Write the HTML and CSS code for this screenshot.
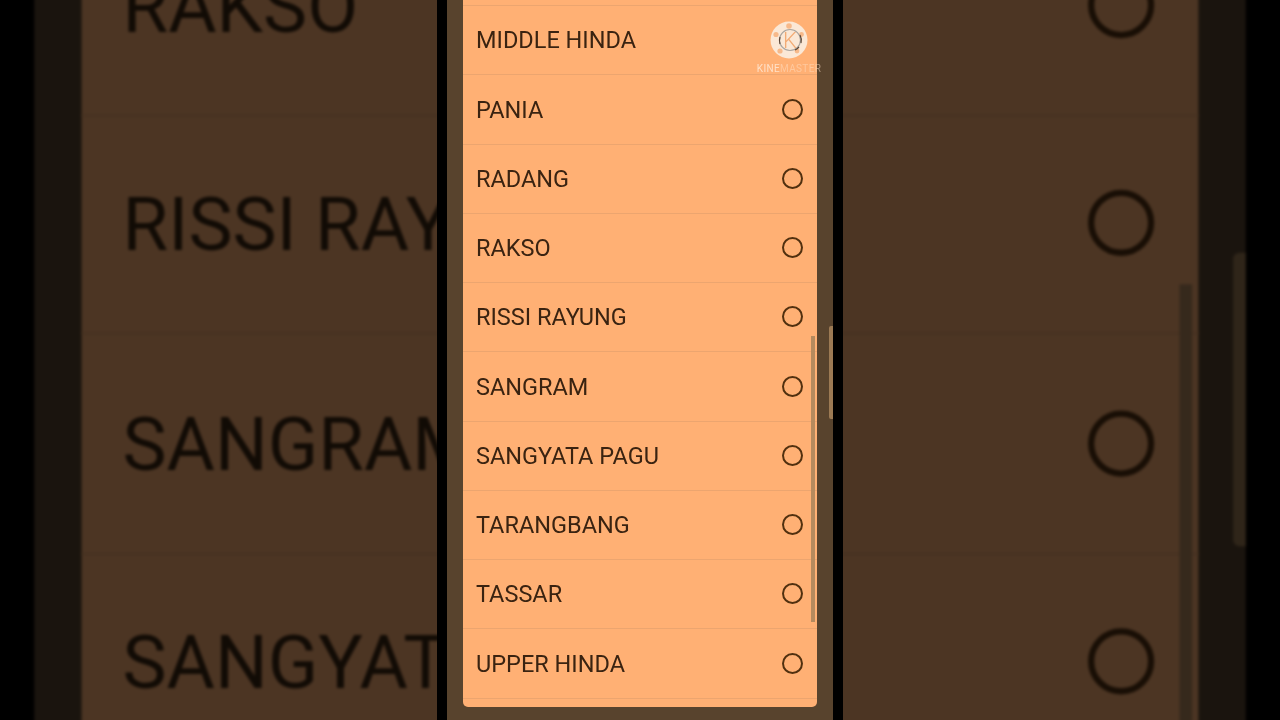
FILE: index.html
```html
<!DOCTYPE html>
<html lang="en">
<head>
<meta charset="utf-8">
<title>Variety list</title>
<link rel="stylesheet" href="styles.css">
</head>
<body>
<div class="stage">
  <div class="phone backdrop" aria-hidden="true">
    <div class="screen">
      <div class="edge-bar"></div>
      <ul class="panel">
        <li class="row"><span>MIDDLE HINDA</span><i class="radio"></i></li>
        <li class="row"><span>PANIA</span><i class="radio"></i></li>
        <li class="row"><span>RADANG</span><i class="radio"></i></li>
        <li class="row"><span>RAKSO</span><i class="radio"></i></li>
        <li class="row"><span>RISSI RAYUNG</span><i class="radio"></i></li>
        <li class="row"><span>SANGRAM</span><i class="radio"></i></li>
        <li class="row"><span>SANGYATA PAGU</span><i class="radio"></i></li>
        <li class="row"><span>TARANGBANG</span><i class="radio"></i></li>
        <li class="row"><span>TASSAR</span><i class="radio"></i></li>
        <li class="row"><span>UPPER HINDA</span><i class="radio"></i></li>
      </ul>
      <div class="scrollbar"></div>
    </div>
  </div>
  <div class="phone front">
    <div class="screen">
      <div class="edge-bar"></div>
      <ul class="panel">
        <li class="row"><span>MIDDLE HINDA</span></li>
        <li class="row"><span>PANIA</span><i class="radio"></i></li>
        <li class="row"><span>RADANG</span><i class="radio"></i></li>
        <li class="row"><span>RAKSO</span><i class="radio"></i></li>
        <li class="row"><span>RISSI RAYUNG</span><i class="radio"></i></li>
        <li class="row"><span>SANGRAM</span><i class="radio"></i></li>
        <li class="row"><span>SANGYATA PAGU</span><i class="radio"></i></li>
        <li class="row"><span>TARANGBANG</span><i class="radio"></i></li>
        <li class="row"><span>TASSAR</span><i class="radio"></i></li>
        <li class="row"><span>UPPER HINDA</span><i class="radio"></i></li>
      </ul>
      <div class="scrollbar"></div>
      <div class="watermark">
        <div class="wm-logo">
          <svg viewBox="0 0 38 38" width="38" height="38">
            <circle cx="19" cy="19" r="18.5" fill="#fbe8d6"/>
            <g fill="#f7b98a">
              <circle cx="19" cy="5" r="2.8"/>
              <circle cx="6" cy="13.5" r="2.6"/>
              <circle cx="31.5" cy="13.5" r="2.4"/>
              <circle cx="10" cy="30" r="2.6"/>
              <circle cx="27" cy="30" r="2.4"/>
            </g>
            <circle cx="20" cy="19" r="10.5" fill="none" stroke="#aaa59f" stroke-width="1.2"/>
            <path d="M30 14a11 11 0 0 1 1 8M25 29a11 11 0 0 0 4-3M10 23a11 11 0 0 1 0-7" fill="none" stroke="#5a4434" stroke-width="1.2"/>
          </svg>
          <span class="wm-k">K</span>
        </div>
        <div class="wm-text">KINE<em>MASTER</em></div>
      </div>
    </div>
  </div>
</div>
</body>
</html>
```
FILE: styles.css
```css
* { box-sizing: border-box; }
html, body { margin: 0; height: 100%; background: #000; overflow: hidden; }
.stage {
  position: relative;
  width: 1280px;
  height: 720px;
  display: flex;
  justify-content: center;
  overflow: hidden;
  background: #000;
}
.phone {
  width: 406px;
  height: 720px;
  padding: 0 10px;
  background: #000;
  font-family: Roboto, "Liberation Sans", sans-serif;
}
.front { position: relative; filter: blur(0.4px); }
.backdrop {
  position: absolute;
  left: 437px;
  top: 0;
  padding: 0 11.3px;
  transform: scale(3.155);
  transform-origin: 50% 50%;
  filter: brightness(0.3) blur(0.5px);
}
.screen {
  position: relative;
  height: 720px;
  padding: 0 16px;
  background: #58432d;
}
.backdrop .screen { padding: 0 14.7px; }
.panel {
  list-style: none;
  margin: 0;
  padding: 6px 0 0;
  height: 707px;
  background: #ffb074;
  border-radius: 0 0 5px 5px;
  display: flex;
  flex-direction: column;
}
.row {
  flex: 0 0 69.25px;
  display: flex;
  align-items: center;
  justify-content: space-between;
  padding: 0 14px 0 13px;
  border-bottom: 1px solid #eca56f;
  font-size: 23.5px;
  line-height: 1;
  color: #3a2311;
}
.row:first-child { box-shadow: 0 -1px 0 #eca56f; }
.row span { position: relative; top: 1px; }
.radio {
  display: block;
  width: 21px;
  height: 21px;
  margin: 0 0.2px 0.6px 0;
  border: 2px solid #51300f;
  border-radius: 50%;
}
.scrollbar {
  position: absolute;
  left: 364px;
  top: 336px;
  width: 4px;
  height: 286px;
  background: #b58a5e;
}
.backdrop .scrollbar { left: 362.7px; }
.edge-bar {
  position: absolute;
  left: 382px;
  top: 326px;
  width: 4px;
  height: 93px;
  border-radius: 2px 0 0 2px;
  background: #9c7a54;
}
.backdrop .edge-bar { left: 379.4px; }
.watermark {
  position: absolute;
  left: 308px;
  top: 21px;
  width: 68px;
  display: flex;
  flex-direction: column;
  align-items: center;
}
.wm-logo { position: relative; width: 38px; height: 38px; }
.wm-logo svg { display: block; }
.wm-k {
  position: absolute;
  inset: 0;
  display: flex;
  align-items: center;
  justify-content: center;
  padding-left: 2px;
  font-size: 22px;
  font-weight: 300;
  color: #f3ab74;
}
.wm-text {
  margin-top: 4px;
  font-size: 10px;
  line-height: 12px;
  letter-spacing: 0.35px;
  color: rgba(255, 236, 220, 0.8);
  white-space: nowrap;
}
.wm-text em { font-style: normal; color: rgba(255, 225, 200, 0.5); }
```
